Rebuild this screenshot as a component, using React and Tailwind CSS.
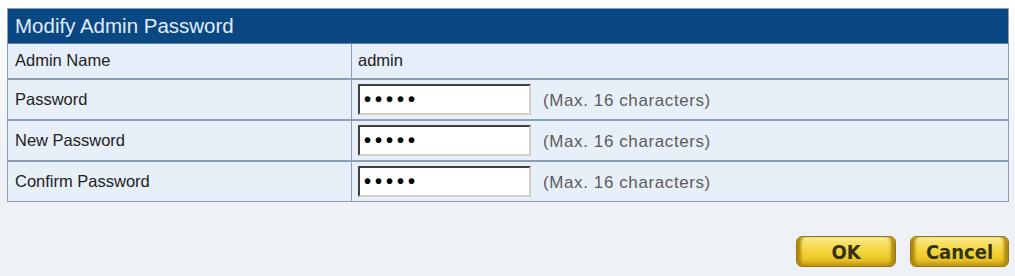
import React from "react";

const rows = [
  { label: "Password" },
  { label: "New Password" },
  { label: "Confirm Password" },
];

function YellowButton({ children, w }) {
  return (
    <button
      type="button"
      className={`h-[31px] ${w} rounded-[6px] border border-[#9a7610] text-[20px] font-bold leading-none text-[#34330f] shadow-[inset_5px_0_3px_-1px_#b08a0e,inset_-5px_0_3px_-1px_#b08a0e,inset_0_2px_2px_#fff6b8,inset_0_-3px_3px_#c99d18] bg-[linear-gradient(to_bottom,#fbe98a_0%,#f4d640_45%,#efcb2b_70%,#d6a81b_100%)]`}
      style={{ fontFamily: '"DejaVu Sans Condensed", "DejaVu Sans", sans-serif', fontStretch: "condensed" }}
    >
      {children}
    </button>
  );
}

export default function App() {
  return (
    <div
      className="w-[1015px] h-[276px] pt-[8px] pl-[7px] pr-[6px] bg-[linear-gradient(to_bottom,#ffffff_0%,#f6f8fb_25%,#eef1f6_60%,#eef1f6_100%)]"
      style={{ fontFamily: '"Liberation Sans", Arial, sans-serif' }}
    >
      <table className="w-[1002px] border-collapse border border-[#8d9db4] text-[16.5px] text-[#222]">
        <thead>
          <tr>
            <th
              colSpan={2}
              className="h-[35px] bg-[#0a4884] pl-[7px] text-left text-[20.5px] font-normal text-[#e2ecf7] border-b border-[#5a7ca3]"
            >
              Modify Admin Password
            </th>
          </tr>
        </thead>
        <tbody>
          <tr className="bg-[#e5eef9]">
            <td className="h-[35px] w-[344px] pl-[7px] border-b-2 border-r border-[#8d9db4]">Admin Name</td>
            <td className="pl-[6px] border-b-2 border-[#8d9db4]">admin</td>
          </tr>
          {rows.map((r, i) => (
            <tr key={r.label} className="bg-[#e7eff9]">
              <td
                className={`h-[41px] w-[344px] pl-[7px] border-r border-[#8d9db4] ${i < rows.length - 1 ? "border-b-2" : ""}`}
              >
                {r.label}
              </td>
              <td className={`pl-[6px] border-[#8d9db4] ${i < rows.length - 1 ? "border-b-2" : ""}`}>
                <div className="flex items-center gap-[12px]">
                  <input
                    type="password"
                    readOnly
                    defaultValue="aaaaa"
                    className="h-[31px] w-[173px] bg-white border-[2px] border-t-[#404040] border-l-[#404040] border-r-[#d4d0c8] border-b-[#d4d0c8] pl-[4px] text-[20px] font-bold tracking-[4px] text-black outline-none"
                  />
                  <span className="text-[17px] tracking-[0.6px] text-[#5c5c5c] mt-[3px]">(Max. 16 characters)</span>
                </div>
              </td>
            </tr>
          ))}
        </tbody>
      </table>
      <div className="mt-[34px] flex justify-end gap-[14px]">
        <YellowButton w="w-[100px]">OK</YellowButton>
        <YellowButton w="w-[99px]">Cancel</YellowButton>
      </div>
    </div>
  );
}
